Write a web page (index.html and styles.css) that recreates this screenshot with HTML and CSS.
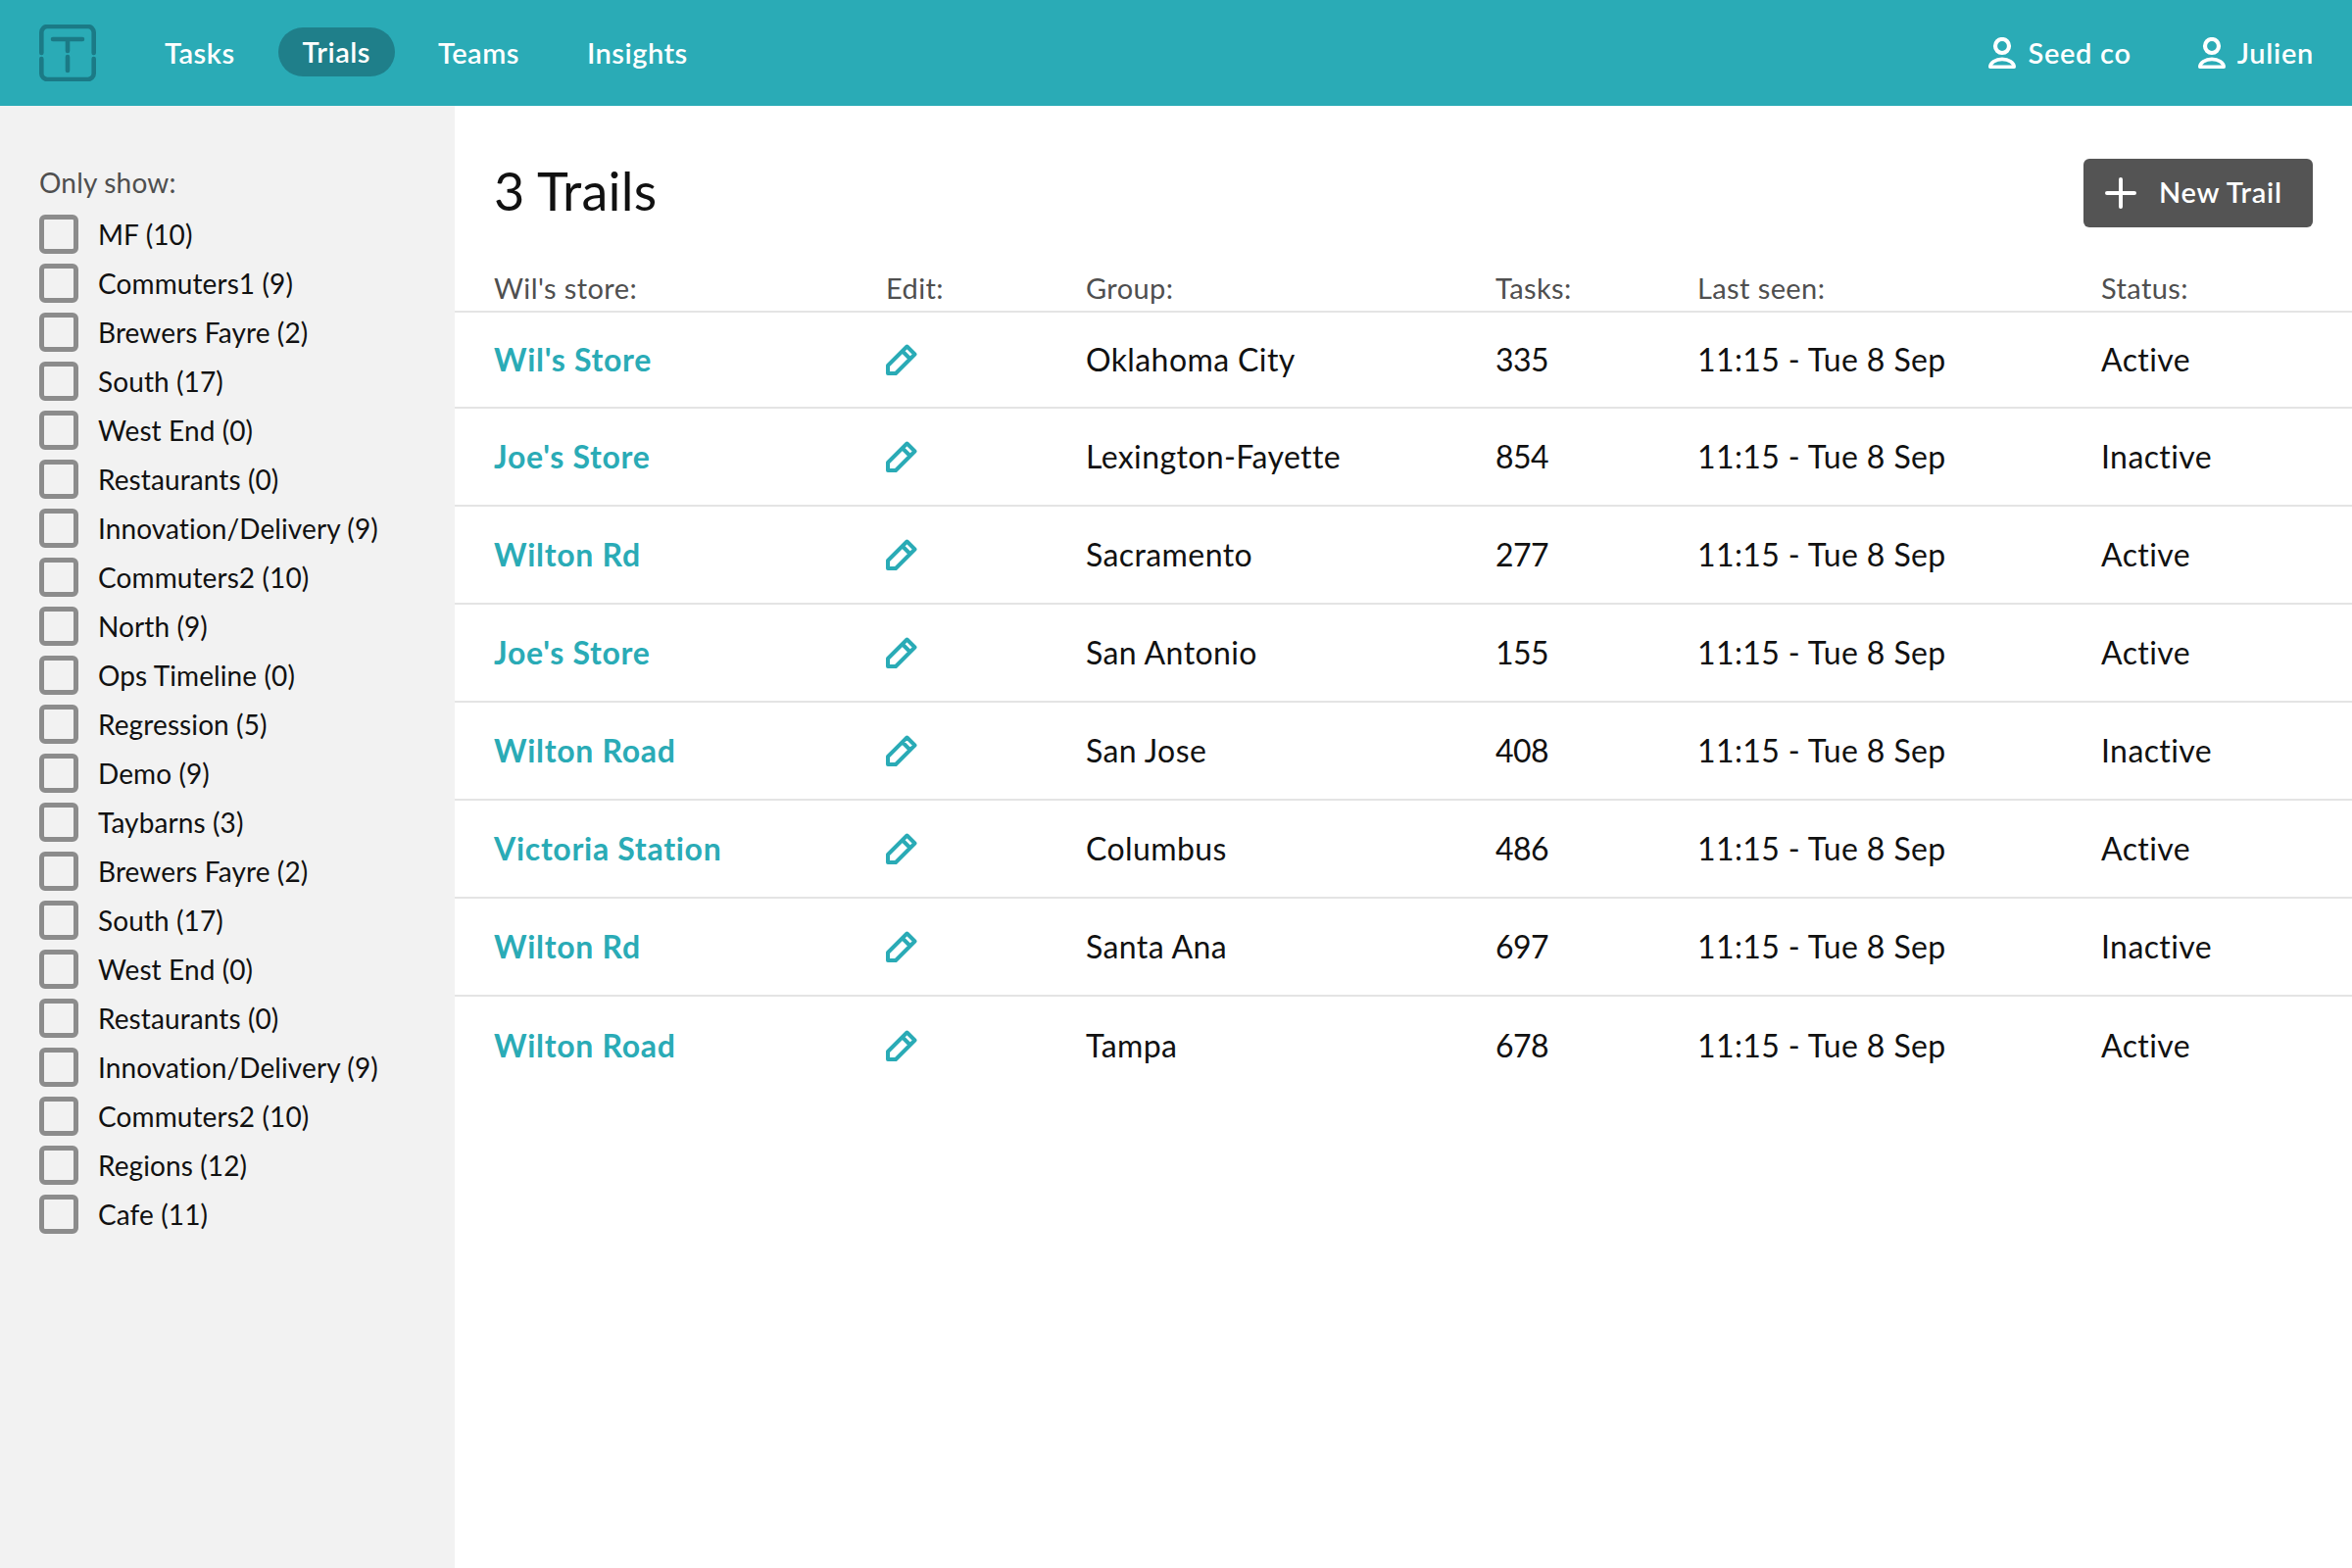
FILE: index.html
```html
<!DOCTYPE html>
<html lang="en">
<head>
<meta charset="utf-8">
<title>Trails</title>
<link rel="stylesheet" href="styles.css">
</head>
<body>
<header class="topbar">
  <svg class="logo" viewBox="0 0 58 58" fill="none"><path d="M2.300 29V8a6 6 0 0 1 6-6h41.400a6 6 0 0 1 6 6v21M2.300 35v15a6 6 0 0 0 6 6h41.400a6 6 0 0 0 6-6V35" stroke="#1b7a86" stroke-width="4.600" stroke-linecap="round"/><path d="M14 15h30M29 15v12M29 33v14" stroke="#1b7a86" stroke-width="4.600" stroke-linecap="round"/></svg>
  <nav class="nav">
    <a class="nav-item">Tasks</a>
    <a class="nav-item active">Trials</a>
    <a class="nav-item">Teams</a>
    <a class="nav-item">Insights</a>
  </nav>
  <div class="account">
    <span class="user"><svg class="user-icon" viewBox="0 0 28 32" fill="none"><circle cx="14" cy="9" r="7" stroke="#fff" stroke-width="4.200"/><path d="M1.800 30.200A12.200 7.800 0 0 1 26.200 30.200Z" stroke="#fff" stroke-width="3.600" stroke-linejoin="round"/></svg>Seed co</span>
    <span class="user"><svg class="user-icon" viewBox="0 0 28 32" fill="none"><circle cx="14" cy="9" r="7" stroke="#fff" stroke-width="4.200"/><path d="M1.800 30.200A12.200 7.800 0 0 1 26.200 30.200Z" stroke="#fff" stroke-width="3.600" stroke-linejoin="round"/></svg>Julien</span>
  </div>
</header>
<div class="layout">
  <aside class="sidebar">
    <div class="filter-title">Only show:</div>
    <label class="filter"><span class="box"></span>MF (10)</label>
    <label class="filter"><span class="box"></span>Commuters1 (9)</label>
    <label class="filter"><span class="box"></span>Brewers Fayre (2)</label>
    <label class="filter"><span class="box"></span>South (17)</label>
    <label class="filter"><span class="box"></span>West End (0)</label>
    <label class="filter"><span class="box"></span>Restaurants (0)</label>
    <label class="filter"><span class="box"></span>Innovation/Delivery (9)</label>
    <label class="filter"><span class="box"></span>Commuters2 (10)</label>
    <label class="filter"><span class="box"></span>North (9)</label>
    <label class="filter"><span class="box"></span>Ops Timeline (0)</label>
    <label class="filter"><span class="box"></span>Regression (5)</label>
    <label class="filter"><span class="box"></span>Demo (9)</label>
    <label class="filter"><span class="box"></span>Taybarns (3)</label>
    <label class="filter"><span class="box"></span>Brewers Fayre (2)</label>
    <label class="filter"><span class="box"></span>South (17)</label>
    <label class="filter"><span class="box"></span>West End (0)</label>
    <label class="filter"><span class="box"></span>Restaurants (0)</label>
    <label class="filter"><span class="box"></span>Innovation/Delivery (9)</label>
    <label class="filter"><span class="box"></span>Commuters2 (10)</label>
    <label class="filter"><span class="box"></span>Regions (12)</label>
    <label class="filter"><span class="box"></span>Cafe (11)</label>
  </aside>
  <main class="main">
    <div class="title-row">
      <h1 class="title">3 Trails</h1>
      <button class="new-btn"><svg class="plus" viewBox="0 0 32 32" fill="none"><path d="M16 2v28M2 16h28" stroke="#fff" stroke-width="4" stroke-linecap="round"/></svg><span class="btn-label">New Trail</span></button>
    </div>
    <div class="row head"><span>Wil's store:</span><span>Edit:</span><span>Group:</span><span>Tasks:</span><span>Last seen:</span><span>Status:</span></div>
    <div class="row first"><a class="store">Wil's Store</a><svg class="pencil" viewBox="0 0 32 32" fill="none"><path d="M2 30v-8L21.500 2.500l8 8L10 30zM16 6.500l10 10" stroke="#2aabb6" stroke-width="4" stroke-linejoin="round"/></svg><span>Oklahoma City</span><span class="num">335</span><span>11:15 - Tue 8 Sep</span><span>Active</span></div>
    <div class="row"><a class="store">Joe's Store</a><svg class="pencil" viewBox="0 0 32 32" fill="none"><path d="M2 30v-8L21.500 2.500l8 8L10 30zM16 6.500l10 10" stroke="#2aabb6" stroke-width="4" stroke-linejoin="round"/></svg><span>Lexington-Fayette</span><span class="num">854</span><span>11:15 - Tue 8 Sep</span><span>Inactive</span></div>
    <div class="row"><a class="store">Wilton Rd</a><svg class="pencil" viewBox="0 0 32 32" fill="none"><path d="M2 30v-8L21.500 2.500l8 8L10 30zM16 6.500l10 10" stroke="#2aabb6" stroke-width="4" stroke-linejoin="round"/></svg><span>Sacramento</span><span class="num">277</span><span>11:15 - Tue 8 Sep</span><span>Active</span></div>
    <div class="row"><a class="store">Joe's Store</a><svg class="pencil" viewBox="0 0 32 32" fill="none"><path d="M2 30v-8L21.500 2.500l8 8L10 30zM16 6.500l10 10" stroke="#2aabb6" stroke-width="4" stroke-linejoin="round"/></svg><span>San Antonio</span><span class="num">155</span><span>11:15 - Tue 8 Sep</span><span>Active</span></div>
    <div class="row"><a class="store">Wilton Road</a><svg class="pencil" viewBox="0 0 32 32" fill="none"><path d="M2 30v-8L21.500 2.500l8 8L10 30zM16 6.500l10 10" stroke="#2aabb6" stroke-width="4" stroke-linejoin="round"/></svg><span>San Jose</span><span class="num">408</span><span>11:15 - Tue 8 Sep</span><span>Inactive</span></div>
    <div class="row"><a class="store">Victoria Station</a><svg class="pencil" viewBox="0 0 32 32" fill="none"><path d="M2 30v-8L21.500 2.500l8 8L10 30zM16 6.500l10 10" stroke="#2aabb6" stroke-width="4" stroke-linejoin="round"/></svg><span>Columbus</span><span class="num">486</span><span>11:15 - Tue 8 Sep</span><span>Active</span></div>
    <div class="row"><a class="store">Wilton Rd</a><svg class="pencil" viewBox="0 0 32 32" fill="none"><path d="M2 30v-8L21.500 2.500l8 8L10 30zM16 6.500l10 10" stroke="#2aabb6" stroke-width="4" stroke-linejoin="round"/></svg><span>Santa Ana</span><span class="num">697</span><span>11:15 - Tue 8 Sep</span><span>Inactive</span></div>
    <div class="row last"><a class="store">Wilton Road</a><svg class="pencil" viewBox="0 0 32 32" fill="none"><path d="M2 30v-8L21.500 2.500l8 8L10 30zM16 6.500l10 10" stroke="#2aabb6" stroke-width="4" stroke-linejoin="round"/></svg><span>Tampa</span><span class="num">678</span><span>11:15 - Tue 8 Sep</span><span>Active</span></div>
  </main>
</div>
</body>
</html>
```
FILE: styles.css
```css
* { box-sizing: border-box; }
html, body { margin: 0; height: 100%; }
body { font-family: "Lato", "Noto Sans", sans-serif; color: #111; background: #fff; height: 1600px; overflow: hidden; display: flex; flex-direction: column; }
.topbar { height: 108px; flex: none; background: #2aabb6; display: flex; align-items: center; padding: 0 40px; color: #fff; }
.logo { width: 58px; height: 58px; flex: none; }
.nav { display: flex; align-items: center; margin-left: 45px; gap: 19px; }
.nav-item { font-size: 29px; font-weight: 600; letter-spacing: 0.5px; line-height: 50px; padding: 0 25px; border-radius: 25px; }
.nav-item.active { background: #1f7f8a; margin-top: -2px; }
.account { margin-left: auto; margin-right: -1px; display: flex; gap: 68px; }
.user { display: flex; align-items: center; font-size: 29px; font-weight: 600; letter-spacing: 0.7px; gap: 12px; line-height: 32px; }
.user-icon { width: 28px; height: 32px; }
.layout { flex: 1; display: flex; min-height: 0; }
.sidebar { width: 464px; flex: none; background: #f2f2f2; padding: 0 40px; }
.filter-title { font-size: 28px; letter-spacing: 0.2px; color: #4f4f4f; line-height: 40px; margin-top: 58px; margin-bottom: 8px; height: 40px; }
.filter { display: flex; align-items: center; height: 50px; font-size: 28px; letter-spacing: 0.1px; color: #111; }
.box { width: 40px; height: 40px; border: 5px solid #8c8c8c; border-radius: 6px; margin-right: 20px; flex: none; }
.main { flex: 1; min-width: 0; }
.title-row { display: flex; justify-content: space-between; align-items: flex-start; padding: 54px 40px 0 40px; height: 166px; }
.title { margin: -2px 0 0; font-size: 54px; font-weight: 400; letter-spacing: 0.2px; line-height: 70px; color: #111; }
.new-btn { width: 234px; height: 70px; border: 0; border-radius: 6px; background: #545454; color: #fff; font: 600 29px "Lato", sans-serif; letter-spacing: 0.7px; display: flex; align-items: center; padding: 0 0 0 22px; gap: 23px; }
.btn-label { margin-top: -3px; }
.plus { width: 32px; height: 32px; flex: none; }
.row { display: grid; grid-template-columns: 400px 204px 418px 206px 412px 1fr; align-items: center; padding-left: 40px; padding-bottom: 2px; height: 100px; border-bottom: 2px solid #e4e4e4; font-size: 32px; letter-spacing: 0.4px; color: #111; }
.row.first { height: 98px; }
.row.head { height: 45px; padding-top: 2px; padding-bottom: 0; font-size: 29px; letter-spacing: 0.4px; color: #4f4f4f; align-items: start; line-height: 36px; }
.row.last { border-bottom: 0; }
.store { color: #2aabb6; font-weight: 700; letter-spacing: 0.7px; }
.pencil { width: 32px; height: 32px; margin-top: 2px; }
.num { letter-spacing: -0.5px; }
```
